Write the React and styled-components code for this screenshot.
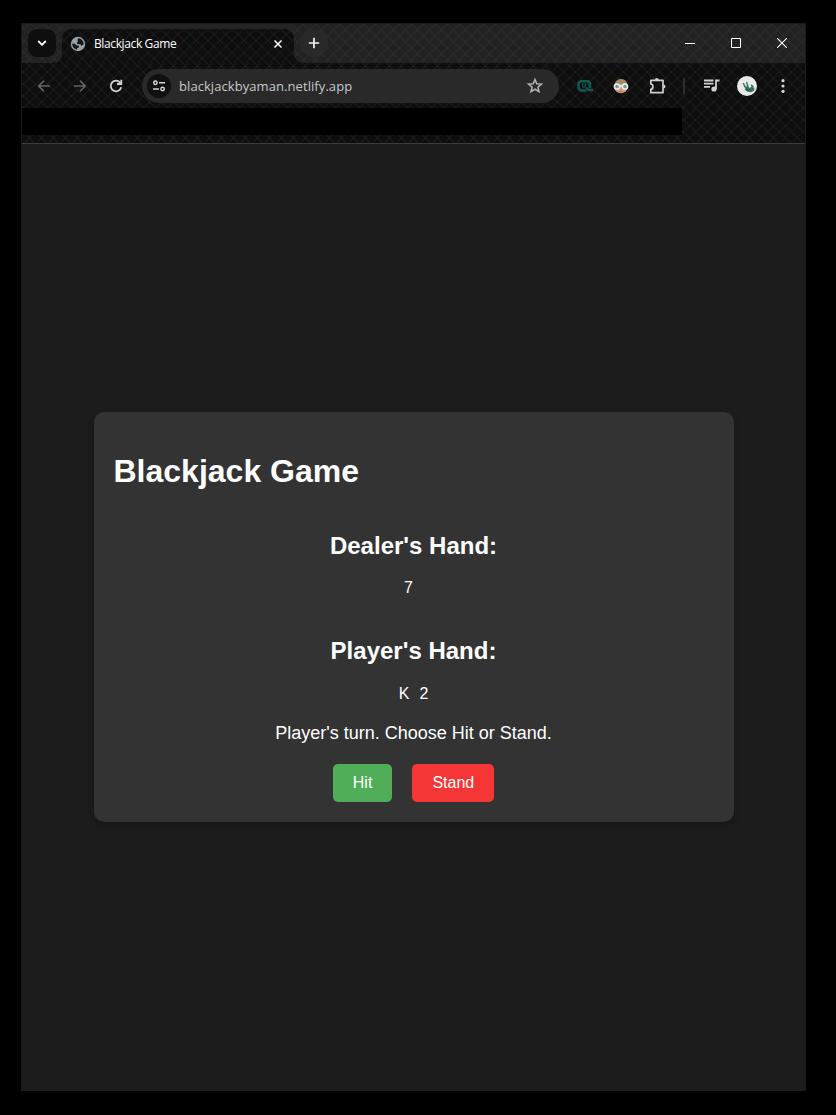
import React from "react";
import styled, { createGlobalStyle } from "styled-components";

const GlobalStyle = createGlobalStyle`
  * { box-sizing: border-box; }
  body { margin: 0; background: #000; }
`;

const Desktop = styled.div`
  height: 1115px;
  padding: 23px 30px 24px 21px;
  background: #000;
`;

const BrowserWindow = styled.div`
  display: flex;
  flex-direction: column;
  width: 785px;
  height: 1068px;
  border: 1px solid #1a1a1a;
  border-bottom: 0;
  background: #1c1c1c;
  font-family: "Open Sans", "Noto Sans", sans-serif;
`;

const hatch = (alpha) => `
  repeating-linear-gradient(45deg, rgba(255,255,255,${alpha}) 0 1px, transparent 1px 8.485px),
  repeating-linear-gradient(-45deg, rgba(255,255,255,${alpha}) 0 1px, transparent 1px 8.485px)
`;

const Chrome = styled.header`
  display: flex;
  flex-direction: column;
  height: 120px;
  border-bottom: 1px solid #3b3b3b;
  background: ${hatch(0.038)}, #0e0e0e;
`;

const TabStrip = styled.div`
  display: flex;
  height: 39px;
`;

const StripStart = styled.div`
  width: 40px;
  height: 39px;
  padding: 5px 6px 0;
  border-radius: 0 0 9px 0;
  background: ${hatch(0.028)}, #222;
`;

const StripEnd = styled.div`
  display: flex;
  flex: 1;
  height: 39px;
  border-radius: 0 0 0 9px;
  background: ${hatch(0.028)}, #222;
`;

const SearchTabs = styled.div`
  display: grid;
  place-items: center;
  width: 28px;
  height: 28px;
  border-radius: 9px;
  background: #0e0e0e;
`;

const TabSlot = styled.div`
  width: 232px;
  padding-top: 5px;
  background: linear-gradient(#242424, #242424) top / 100% 16px no-repeat;
`;

const Tab = styled.div`
  display: flex;
  align-items: center;
  height: 34px;
  padding: 0 10px 5px 8px;
  border-radius: 9px 9px 0 0;
  background: ${hatch(0.038)}, #0e0e0e;
`;

const TabTitle = styled.span`
  flex: 1;
  margin-left: 8px;
  color: #fff;
  font-size: 12px;
  line-height: 16px;
  letter-spacing: -0.38px;
  white-space: nowrap;
`;

const NewTab = styled.div`
  display: grid;
  place-items: center;
  width: 28px;
  height: 28px;
  margin: 5px 0 0 6px;
  border-radius: 50%;
  background: #292929;
`;

const WindowControls = styled.div`
  display: flex;
  margin-left: auto;
`;

const ControlButton = styled.div`
  display: grid;
  place-items: center;
  width: 46px;
  height: 38px;
`;

const Toolbar = styled.div`
  display: flex;
  align-items: center;
  height: 46px;
`;

const ToolButton = styled.div`
  display: grid;
  place-items: center;
  flex: none;
  width: ${(p) => p.$width || 36}px;
  height: 34px;
  color: ${(p) => (p.$dim ? "#666" : "#d0d0d0")};
`;

const AddressBar = styled.div`
  display: flex;
  align-items: center;
  width: 417px;
  height: 34px;
  margin: 0 8px 0 4px;
  padding: 0 15px 0 5px;
  border-radius: 17px;
  background: #292929;
`;

const SiteInfo = styled.div`
  display: grid;
  place-items: center;
  width: 24px;
  height: 24px;
  border-radius: 50%;
  background: #101010;
`;

const Address = styled.span`
  flex: 1;
  margin-left: 8px;
  color: #c7c7c7;
  font-size: 13px;
  line-height: 20px;
  letter-spacing: 0.07px;
  white-space: nowrap;
`;

const Divider = styled.div`
  width: 2px;
  height: 16px;
  margin: 0 8px;
  background: #2e2e2e;
`;

const BookmarksBar = styled.div`
  width: 660px;
  height: 27px;
  margin-top: -1px;
  background: #000;
`;

const Page = styled.main`
  display: flex;
  flex: 1;
  align-items: center;
  justify-content: center;
  padding-bottom: 2px;
  background: #1c1c1c;
  color: #fff;
  font: 16px "Liberation Sans", Arial, sans-serif;
`;

const GameCard = styled.section`
  display: flex;
  flex-direction: column;
  width: 640px;
  height: 410px;
  padding: 20px;
  border-radius: 10px;
  background: #333;
  box-shadow: 0 4px 8px rgba(0, 0, 0, 0.2);
`;

const Title = styled.h1`
  margin: 21.44px 0 22.3px;
  font-size: 32px;
  line-height: 37px;
`;

const Hand = styled.div`
  margin-bottom: ${(p) => p.$after}px;
  text-align: center;
`;

const HandTitle = styled.h2`
  margin: 0;
  padding: 19.92px 0 ${(p) => p.$below || 19.92}px;
  font-size: 24px;
  line-height: 27px;
`;

const Cards = styled.div`
  height: 18.4px;
  line-height: 18.4px;
`;

const PlayingCard = styled.span`
  margin-right: ${(p) => p.$gap || 0}px;
`;

const Message = styled.div`
  margin-bottom: 20px;
  font-size: 18px;
  line-height: 21px;
  text-align: center;
`;

const Actions = styled.div`
  display: flex;
  justify-content: center;
  gap: 20px;
`;

const ActionButton = styled.button`
  height: 38px;
  padding: 0 20px;
  border: 0;
  border-radius: 5px;
  background: ${(p) => (p.$danger ? "#f43636" : "#50ae58")};
  color: #fff;
  font: 16px/38px "Liberation Sans", Arial, sans-serif;
`;

const Line = ({ size = 16, w = 1.6, d, children }) => (
  <svg width={size} height={size} viewBox={`0 0 ${size} ${size}`} fill="none" stroke="currentColor" strokeWidth={w}>
    {d && <path d={d} />}
    {children}
  </svg>
);

const GlobeIcon = () => (
  <svg width="16" height="16" viewBox="0 0 16 16">
    <circle cx="8" cy="8" r="7.2" fill="#9aa0a6" />
    <path d="M8.4 2.3 7.3 4.2 8.2 5.3 6.8 6.8 7.4 8 10.5 8.2 11.2 9.8 13.6 8.6C13.9 5.4 11.5 2.5 8.4 2.3ZM2.2 7.6 4.8 7.7 6.2 9.3 9 9.7 8.7 11.5 7 12.2 6.8 13.7C4 13.1 2.1 10.6 2.2 7.6Z" fill="#141517" />
  </svg>
);

const StarIcon = () => (
  <svg width="18" height="18" viewBox="0 0 18 18" fill="none" stroke="#b0b0b0" strokeWidth="1.6">
    <path d="m9 2.6 1.8 4.2 4.6.4-3.5 3 1.1 4.5L9 12.3l-4 2.4 1.1-4.5-3.5-3 4.6-.4Z" />
  </svg>
);

const CameraIcon = () => (
  <svg width="16" height="14" viewBox="0 0 16 14" fill="none" stroke="#12594f" strokeWidth="2.6">
    <path d="M9.500 11.500H4L1.600 9.700V4L3.800 2.200h7.600l1.500 1.700v5.500" />
    <rect x="5.500" y="5" width="3" height="3" strokeWidth="1" />
    <path d="m9 8.500 2.600 2.700H16" strokeWidth="2.200" />
  </svg>
);

const FaceIcon = () => (
  <svg width="16" height="16" viewBox="0 0 16 16">
    <circle cx="8" cy="8.5" r="6.8" fill="#d39a7c" />
    <path d="M1.800 6C2.500 2.500 5 1 8 1s5.500 1.500 6.200 5Z" fill="#a88a67" />
    <path d="M5.500 12.800h5L9.500 14.500h-3Z" fill="#d7785c" />
    <circle cx="4" cy="8.5" r="2.6" fill="#729aa6" stroke="#eee" strokeWidth="1.5" />
    <circle cx="12" cy="8.5" r="2.6" fill="#729aa6" stroke="#eee" strokeWidth="1.5" />
    <path d="M6.500 8h3" stroke="#eee" strokeWidth="1.5" />
  </svg>
);

const PuzzleIcon = () => (
  <svg width="18" height="18" viewBox="0 0 18 18">
    <path d="M2.800 3.300H15V15.700H2.800V12.300C5.600 12 5.600 7.300 2.800 7Z" fill="none" stroke="#d0d0d0" strokeWidth="1.7" strokeLinejoin="round" />
    <path d="M6.800 3a2 2 0 0 1 4 0ZM15.500 7.600a2 2 0 0 1 0 4Z" fill="#d0d0d0" />
  </svg>
);

const MediaIcon = () => (
  <svg width="18" height="16" viewBox="0 0 18 16" fill="none" stroke="#d0d0d0" strokeWidth="1.8">
    <path d="M2 2.500h9.500M2 5.700h9.500M2 8.900h6M14 11V2.500h3.500" />
    <circle cx="12" cy="11" r="2.6" fill="#d0d0d0" stroke="none" />
  </svg>
);

const AvatarIcon = () => (
  <svg width="20" height="20" viewBox="0 0 20 20">
    <circle cx="10" cy="10" r="10" fill="#e9e9e9" />
    <path d="M5.500 7 7 7l1.500 3 1.500.8L9 6.200l1-.8L11 8.500l1.300 3.700 2.200-1.700-1-2.300 2 .8 1.200 1.500-.5 1.500 1.500-.5-.8 3.500-3.500 1.200-3.400-.7L7.500 13.500l1-.7-1.500-2.300Z" fill="#35735a" />
    <path d="m9 12.500 2.500 2M12 12.500l1.500 2" stroke="#174a38" />
  </svg>
);

export default function App() {
  return (
    <>
      <GlobalStyle />
      <Desktop>
        <BrowserWindow>
          <Chrome>
            <TabStrip>
              <StripStart>
                <SearchTabs>
                  <svg width="10" height="6" viewBox="0 0 10 6" fill="none" stroke="#fff" strokeWidth="1.8">
                    <path d="m1.200 1 3.800 3.800L8.800 1" />
                  </svg>
                </SearchTabs>
              </StripStart>
              <TabSlot>
                <Tab>
                  <GlobeIcon />
                  <TabTitle>Blackjack Game</TabTitle>
                  <svg width="12" height="12" viewBox="0 0 12 12" stroke="#fff" strokeWidth="1.5">
                    <path d="m2.500 2.500 7 7m0-7-7 7" />
                  </svg>
                </Tab>
              </TabSlot>
              <StripEnd>
                <NewTab>
                  <svg width="12" height="12" viewBox="0 0 12 12" stroke="#f2f2f2" strokeWidth="1.7">
                    <path d="M6 .8v10.400M.8 6h10.400" />
                  </svg>
                </NewTab>
                <WindowControls>
                  <ControlButton>
                    <svg width="10" height="10" viewBox="0 0 10 10"><path d="M0 5h10v1H0Z" fill="#fff" /></svg>
                  </ControlButton>
                  <ControlButton>
                    <svg width="10" height="10" viewBox="0 0 10 10"><path d="M.5.5h9v9h-9Z" fill="none" stroke="#fff" /></svg>
                  </ControlButton>
                  <ControlButton>
                    <svg width="10" height="10" viewBox="0 0 10 10"><path d="m.2.200 9.600 9.600m0-9.600L.2 9.800" stroke="#fff" strokeWidth="1.1" /></svg>
                  </ControlButton>
                </WindowControls>
              </StripEnd>
            </TabStrip>
            <Toolbar>
              <ToolButton $width={44} $dim><Line d="M14 8H3M8 2.700 2.700 8 8 13.300" /></ToolButton>
              <ToolButton $width={28} $dim><Line d="M2 8h11M8 2.700 13.300 8 8 13.300" /></ToolButton>
              <ToolButton $width={44}>
                <Line w={1.8}>
                  <path d="M13.200 9.200A5.300 5.300 0 1 1 12.200 4.700L13.200 6" />
                  <path d="M13.300 1.800V6H9" />
                </Line>
              </ToolButton>
              <AddressBar>
                <SiteInfo>
                  <svg width="14" height="14" viewBox="0 0 14 14" fill="none" stroke="#d5d5d5" strokeWidth="1.5">
                    <circle cx="3.4" cy="3.8" r="1.7" />
                    <circle cx="10.6" cy="10" r="1.7" />
                    <path d="M7 3.800h6M1 10h6" />
                  </svg>
                </SiteInfo>
                <Address>blackjackbyaman.netlify.app</Address>
                <StarIcon />
              </AddressBar>
              <ToolButton><CameraIcon /></ToolButton>
              <ToolButton><FaceIcon /></ToolButton>
              <ToolButton><PuzzleIcon /></ToolButton>
              <Divider />
              <ToolButton><MediaIcon /></ToolButton>
              <ToolButton><AvatarIcon /></ToolButton>
              <ToolButton>
                <svg width="4" height="16" viewBox="0 0 4 16" fill="#d5d5d5">
                  <circle cx="2" cy="2.7" r="1.6" /><circle cx="2" cy="8" r="1.6" /><circle cx="2" cy="13.3" r="1.6" />
                </svg>
              </ToolButton>
            </Toolbar>
            <BookmarksBar />
          </Chrome>
          <Page>
            <GameCard>
              <Title>Blackjack Game</Title>
              <Hand $after={20}>
                <HandTitle>Dealer's Hand:</HandTitle>
                <Cards><PlayingCard $gap={10}>7</PlayingCard></Cards>
              </Hand>
              <Hand $after={19.6}>
                <HandTitle $below={20.32}>Player's Hand:</HandTitle>
                <Cards><PlayingCard $gap={10}>K</PlayingCard><PlayingCard>2</PlayingCard></Cards>
              </Hand>
              <Message>Player's turn. Choose Hit or Stand.</Message>
              <Actions>
                <ActionButton>Hit</ActionButton>
                <ActionButton $danger>Stand</ActionButton>
              </Actions>
            </GameCard>
          </Page>
        </BrowserWindow>
      </Desktop>
    </>
  );
}
